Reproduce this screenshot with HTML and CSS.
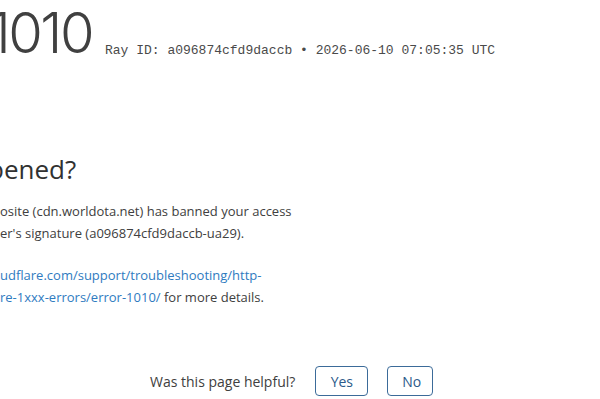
FILE: index.html
```html
<!DOCTYPE html>
<html lang="en">
<head>
<meta charset="utf-8">
<title>Error 1010</title>
<link rel="stylesheet" href="styles.css">
</head>
<body>
  <header class="top">
    <div class="code-box"><h1 class="code">1010</h1></div>
    <span class="ray">Ray ID: a096874cfd9daccb <span class="dot">•</span> 2026-06-10 07:05:35 UTC</span>
  </header>
  <section class="what">
    <h2 class="title">pened?</h2>
    <p class="para">osite (cdn.worldota.net) has banned your access<br>er's signature (a096874cfd9daccb-ua29).</p>
    <p class="para para-link"><a class="link" href="#">udflare.com/support/troubleshooting/http-<br>re-1xxx-errors/error-1010/</a> for more details.</p>
  </section>
  <footer class="feedback">
    <span class="ask">Was this page helpful?</span>
    <button class="btn btn-yes" type="button">Yes</button>
    <button class="btn btn-no" type="button">No</button>
  </footer>
</body>
</html>
```
FILE: styles.css
```css
html, body {
  margin: 0;
  padding: 0;
  background: #ffffff;
}
body {
  width: 600px;
  height: 399px;
  overflow: hidden;
  font-family: "Open Sans", "Noto Sans", sans-serif;
  color: #404040;
}
.top {
  display: flex;
  align-items: baseline;
  gap: 13px;
  padding-top: 3px;
  height: 60px;
}
.code-box {
  display: flex;
  justify-content: flex-end;
  width: 92px;
}
.code {
  margin: 0;
  font-family: "Inter", sans-serif;
  font-weight: 300;
  font-size: 56px;
  line-height: 60px;
  letter-spacing: -2.5px;
  color: #404040;
  white-space: nowrap;
  font-variant-numeric: proportional-nums;
}
.ray {
  position: relative;
  top: 1px;
  font-family: "Liberation Mono", monospace;
  font-size: 13px;
  color: #4a4a4a;
  white-space: nowrap;
}
.what {
  padding-top: 90px;
}
.title {
  margin: 0 0 0 -12px;
  font-weight: 400;
  font-size: 26px;
  line-height: 32px;
  color: #313131;
  white-space: nowrap;
}
.para {
  margin: 15px 0 0 0;
  font-size: 13px;
  line-height: 22px;
  white-space: nowrap;
}
.para-link {
  margin-top: 20px;
}
.link {
  color: #2f7bbf;
  text-decoration: none;
}
.feedback {
  display: flex;
  align-items: center;
  margin-top: 58px;
  padding-left: 150px;
  font-size: 14px;
  color: #404040;
}
.ask {
  margin-right: 20px;
}
.btn {
  height: 30px;
  padding: 0 14px;
  border: 1px solid #3b6b99;
  border-radius: 4px;
  background: #ffffff;
  color: #2c5a8a;
  font-family: "Open Sans", "Noto Sans", sans-serif;
  font-size: 14px;
}
.btn-yes {
  width: 53px;
  margin-right: 19px;
}
.btn-no {
  width: 46px;
}
```
